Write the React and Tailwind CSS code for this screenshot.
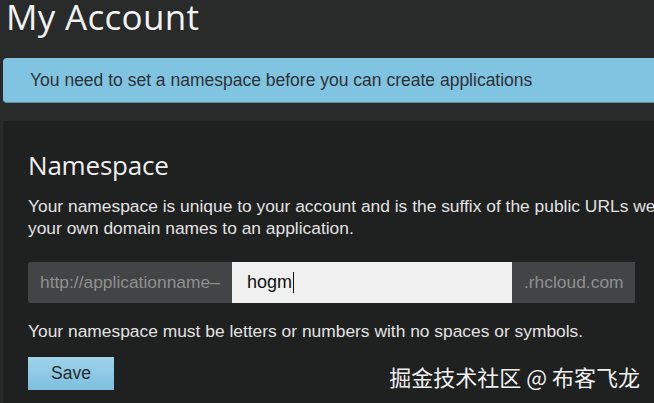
export default function App() {
  return (
    <div className="w-[654px] h-[403px] overflow-hidden bg-[#292a2a] font-['Liberation_Sans',Arial,sans-serif]">
      {/* Page title */}
      <h1 className="pl-[6px] h-[34px] text-[35px] leading-[34px] text-[#f2f2f2] font-['Open_Sans',sans-serif] tracking-[0.3px] whitespace-nowrap">
        My Account
      </h1>

      {/* Alert */}
      <div className="ml-[3px] mt-[24px] h-[45px] rounded-l-[4px] bg-[#80c4e2] border-b border-[#5f8fa3] flex items-center pl-[27px] text-[17.5px] text-[#2d3236] whitespace-nowrap">
        You need to set a namespace before you can create applications
      </div>

      {/* Panel */}
      <div className="mt-[18px] ml-[3px] h-[300px] bg-[#1f2020] pl-[25px] pt-[27px]">
        <h2 className="text-[26px] leading-[34px] text-[#eeeeee] font-['Open_Sans',sans-serif] tracking-[-0.2px]">
          Namespace
        </h2>
        <p className="mt-[13px] text-[17.4px] leading-[22px] text-[#e2e2e2] whitespace-nowrap">
          Your namespace is unique to your account and is the suffix of the public URLs we
          <br />
          your own domain names to an application.
        </p>

        {/* Input group */}
        <div className="mt-[23px] flex h-[41px] w-[607px]">
          <div className="w-[204px] bg-[#434445] rounded-l-[3px] flex items-center pl-[12px] text-[17.4px] text-[#8f9090] whitespace-nowrap">
            http://applicationname–
          </div>
          <div className="w-[280px] bg-[#f0f0f0] flex items-center pl-[15px] text-[18px] text-[#111]">
            hogm<span className="ml-[1px] inline-block w-[1px] h-[21px] bg-[#111]"></span>
          </div>
          <div className="w-[123px] bg-[#434445] flex items-center pl-[12px] text-[17.4px] text-[#8f9090]">
            .rhcloud.com
          </div>
        </div>

        <p className="mt-[17px] text-[17.4px] leading-[22px] text-[#e2e2e2] whitespace-nowrap">
          Your namespace must be letters or numbers with no spaces or symbols.
        </p>

        <div className="mt-[15px] flex items-start justify-between pr-[14px]">
          <button className="w-[86px] h-[33px] bg-gradient-to-b from-[#9fd3ea] to-[#7cc0de] text-[17.5px] text-[#262a2e] flex items-center justify-center">
            Save
          </button>
          <div className="mt-[5px] text-[22px] leading-[28px] text-[#f0f0f0] font-['Noto_Sans_CJK_SC',sans-serif] whitespace-nowrap">
            掘金技术社区 @ 布客飞龙
          </div>
        </div>
      </div>
    </div>
  );
}
